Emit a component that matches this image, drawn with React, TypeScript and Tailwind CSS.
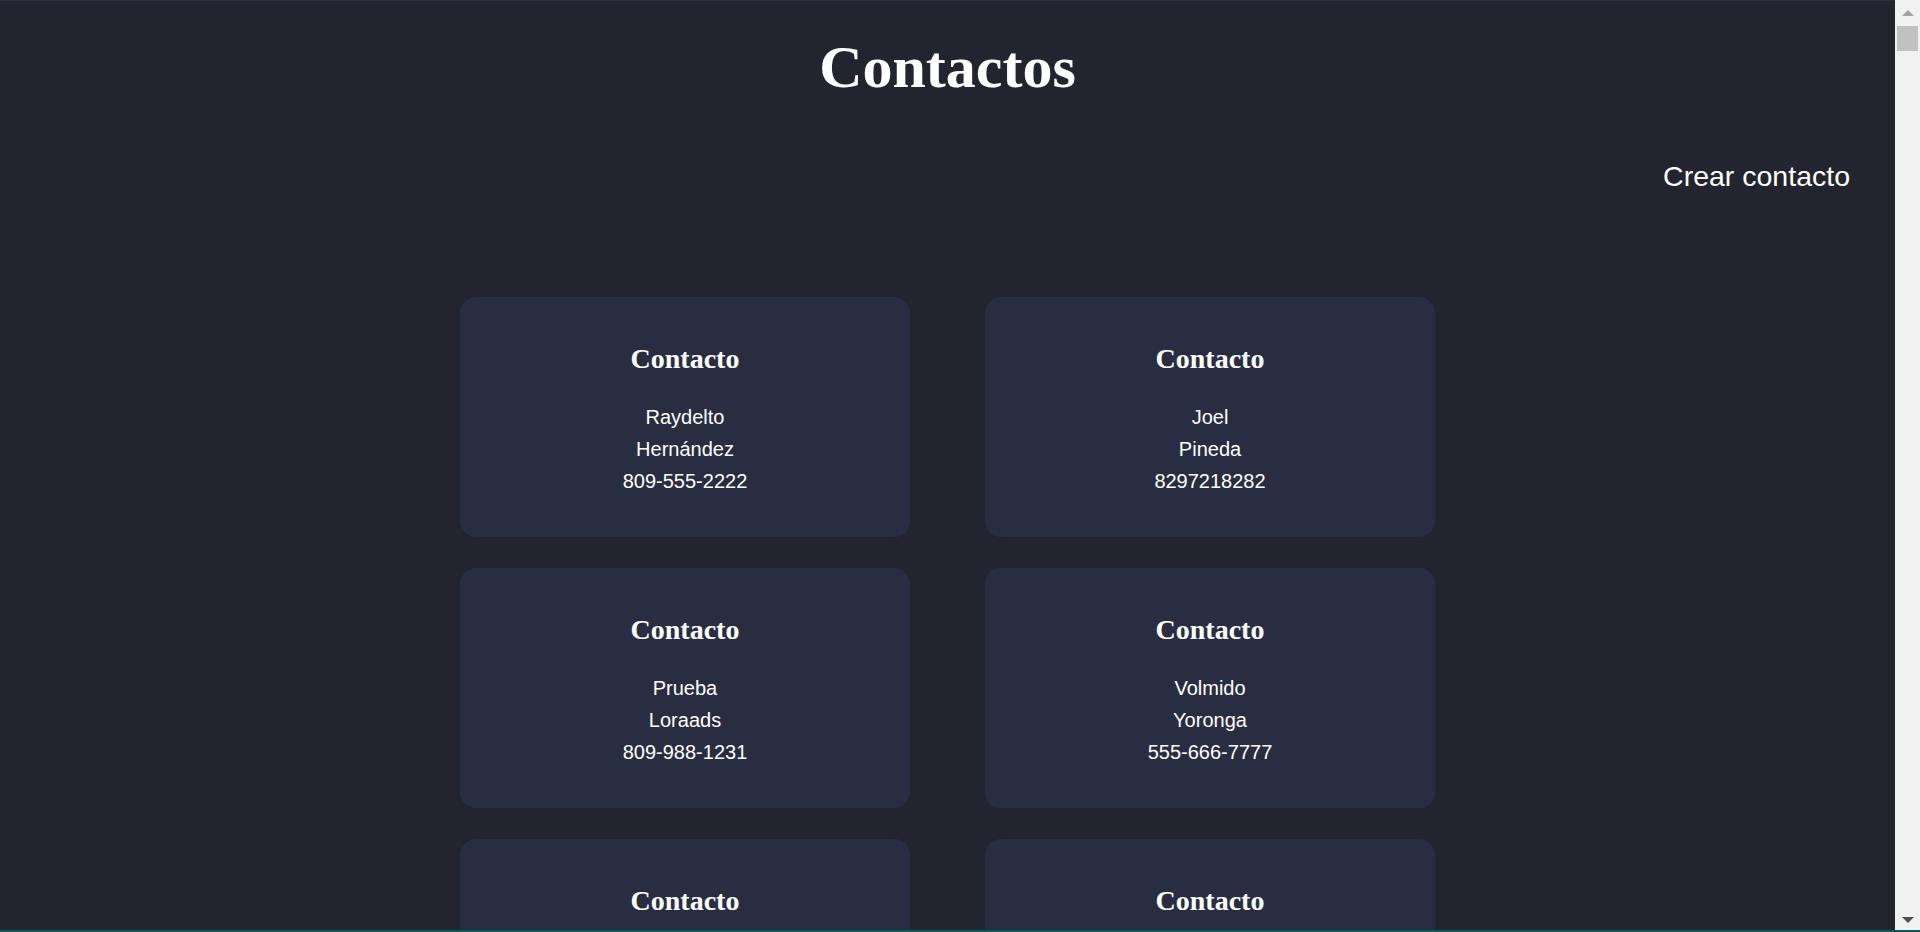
import React from "react";

type Contacto = { nombre: string; apellido: string; telefono: string };

const contactos: Contacto[] = [
  { nombre: "Raydelto", apellido: "Hernández", telefono: "809-555-2222" },
  { nombre: "Joel", apellido: "Pineda", telefono: "8297218282" },
  { nombre: "Prueba", apellido: "Loraads", telefono: "809-988-1231" },
  { nombre: "Volmido", apellido: "Yoronga", telefono: "555-666-7777" },
  { nombre: "Raydelto", apellido: "Hernández", telefono: "809-555-2222" },
  { nombre: "Joel", apellido: "Pineda", telefono: "8297218282" },
];

function ContactCard({ c }: { c: Contacto }) {
  return (
    <div className="w-[450px] h-[240px] rounded-[16px] bg-[#292d41] pt-[46px] text-center text-white">
      <h2 className="font-['Liberation_Serif',serif] font-bold text-[28px] leading-[32px] mb-[26px]">Contacto</h2>
      <div className="font-['Liberation_Sans',Arial,sans-serif] text-[20px] leading-[32px]">
        <div>{c.nombre}</div>
        <div>{c.apellido}</div>
        <div>{c.telefono}</div>
      </div>
    </div>
  );
}

function FakeScrollbar() {
  return (
    <div className="fixed top-0 right-0 bottom-0 w-[25px] bg-[#f1f1f1] flex flex-col items-center">
      <div className="h-[25px] flex items-center justify-center">
        <div className="w-0 h-0 border-l-[6px] border-r-[6px] border-b-[6px] border-l-transparent border-r-transparent border-b-[#a3a3a3]" />
      </div>
      <div className="mt-px w-[21px] h-[25px] bg-[#c1c1c1]" />
      <div className="flex-1" />
      <div className="h-[25px] flex items-center justify-center">
        <div className="w-0 h-0 border-l-[6px] border-r-[6px] border-t-[6px] border-l-transparent border-r-transparent border-t-[#505050]" />
      </div>
    </div>
  );
}

export default function App() {
  return (
    <div className="h-screen overflow-hidden bg-[#22252f]">
      <div className="pr-[25px]">
        <h1 className="pt-[34px] text-center text-white font-['Liberation_Serif',serif] font-bold text-[60px] leading-[66px]">
          Contactos
        </h1>

        <div className="mt-[60px] flex justify-end pr-[45px]">
          <a href="#" className="text-white font-['Liberation_Sans',Arial,sans-serif] text-[28.5px] leading-[32px]">
            Crear contacto
          </a>
        </div>

        <div className="mt-[105px] mx-auto w-[975px] grid grid-cols-[450px_450px] gap-x-[75px] gap-y-[31px] pb-[31px]">
          {contactos.map((c, i) => (
            <ContactCard key={i} c={c} />
          ))}
        </div>
      </div>

      {/* window edges */}
      <div className="fixed top-0 left-0 right-[25px] h-px bg-[#2e3142]" />
      <FakeScrollbar />
      <div className="fixed bottom-0 left-0 right-0 h-[2px] bg-[#0b5857]" />
    </div>
  );
}
